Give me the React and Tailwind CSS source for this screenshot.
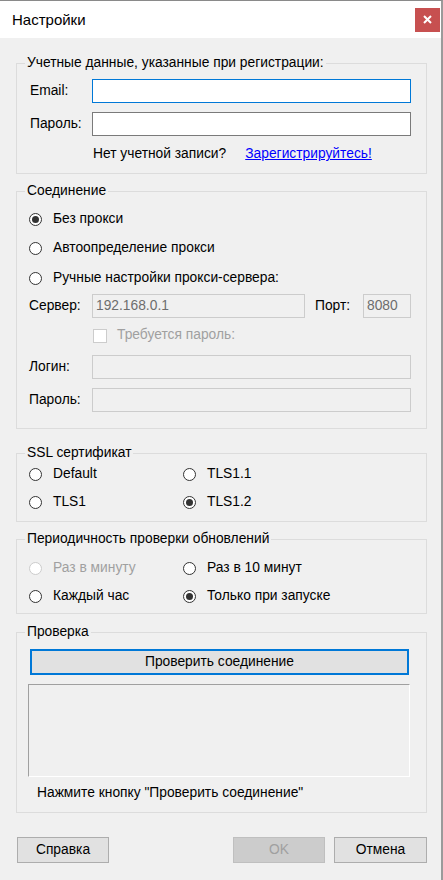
import React from "react";

const font = { fontFamily: '"Liberation Sans", Arial, sans-serif' };

function Radio({ checked, disabled, label, className = "" }) {
  return (
    <div className={`flex items-center h-[20px] ${className}`}>
      <span
        className={`w-[13px] h-[13px] rounded-full border bg-white flex items-center justify-center shrink-0 ${
          disabled ? "border-[#cccccc]" : "border-[#333333]"
        }`}
      >
        {checked && <span className="w-[7px] h-[7px] rounded-full bg-[#333333]" />}
      </span>
      <span className={`ml-[11px] ${disabled ? "text-[#a0a0a0]" : "text-black"}`}>{label}</span>
    </div>
  );
}

function Group({ title, className = "", children }) {
  return (
    <div className={`relative border border-[#dcdcdc] ${className}`}>
      <span className="absolute -top-[9px] left-[8px] px-[2px] bg-[#f0f0f0] leading-[16px]">{title}</span>
      {children}
    </div>
  );
}

function TextBox({ focused, disabled, value, className = "" }) {
  const border = focused
    ? "border-[#0078d7]"
    : disabled
    ? "border-[#cccccc]"
    : "border-[#7a7a7a]";
  return (
    <div
      className={`h-[24px] border ${border} ${
        disabled ? "bg-[#f0f0f0] text-[#6d6d6d]" : "bg-white"
      } flex items-center px-[3px] ${className}`}
    >
      {value}
    </div>
  );
}

export default function App() {
  return (
    <div
      className="w-[443px] h-[880px] bg-[#f0f0f0] text-[13.8px] text-black border-t border-[#8a8a8a] border-r-2 border-r-[#9a9a9a] overflow-hidden"
      style={font}
    >
      {/* title bar */}
      <div className="h-[37px] bg-white flex items-center justify-between pl-[12px] pr-[1px]">
        <span className="text-[15px] mt-[1px]">Настройки</span>
        <div className="w-[25px] h-[24px] bg-[#c75050] flex items-center justify-center">
          <svg width="9" height="9" viewBox="0 0 9 9">
            <path d="M1 1 L8 8 M8 1 L1 8" stroke="white" strokeWidth="2" />
          </svg>
        </div>
      </div>

      <div className="pl-[16px] pr-[14px] pt-[25px]">
        {/* account */}
        <Group title="Учетные данные, указанные при регистрации:" className="h-[111px]">
          <div className="pt-[15px] pl-[13px] pr-[15px]">
            <div className="flex items-center">
              <span className="w-[62px]">Email:</span>
              <TextBox focused className="flex-1" />
            </div>
            <div className="flex items-center mt-[9px]">
              <span className="w-[62px]">Пароль:</span>
              <TextBox className="flex-1" />
            </div>
            <div className="flex items-center mt-[8px] pl-[63px]">
              <span>Нет учетной записи?</span>
              <span className="ml-[19px] text-[#0000ff] underline">Зарегистрируйтесь!</span>
            </div>
          </div>
        </Group>

        {/* connection */}
        <Group title="Соединение" className="mt-[17px] h-[238px]">
          <div className="pl-[12px] pr-[15px] pt-[17px]">
            <Radio checked label="Без прокси" />
            <Radio label="Автоопределение прокси" className="mt-[9px]" />
            <Radio label="Ручные настройки прокси-сервера:" className="mt-[10px]" />
            <div className="flex items-center mt-[6px]">
              <span className="w-[63px]">Сервер:</span>
              <TextBox disabled value="192.168.0.1" className="w-[213px]" />
              <span className="ml-[10px] w-[48px]">Порт:</span>
              <TextBox disabled value="8080" className="w-[48px]" />
            </div>
            <div className="flex items-center mt-[10px] pl-[64px] h-[15px]">
              <span className="w-[14px] h-[14px] border border-[#cccccc] bg-white" />
              <span className="ml-[10px] text-[#a0a0a0]">Требуется пароль:</span>
            </div>
            <div className="flex items-center mt-[12px]">
              <span className="w-[63px]">Логин:</span>
              <TextBox disabled className="flex-1" />
            </div>
            <div className="flex items-center mt-[9px]">
              <span className="w-[63px]">Пароль:</span>
              <TextBox disabled className="flex-1" />
            </div>
          </div>
        </Group>

        {/* ssl */}
        <Group title="SSL сертификат" className="mt-[24px] h-[69px]">
          <div className="grid grid-cols-[154px_1fr] pl-[12px] pt-[10px] gap-y-[8px]">
            <Radio label="Default" />
            <Radio label="TLS1.1" />
            <Radio label="TLS1" />
            <Radio checked label="TLS1.2" />
          </div>
        </Group>

        {/* update interval */}
        <Group title="Периодичность проверки обновлений" className="mt-[17px] h-[75px]">
          <div className="grid grid-cols-[154px_1fr] pl-[12px] pt-[18px] gap-y-[8px]">
            <Radio disabled label="Раз в минуту" />
            <Radio label="Раз в 10 минут" />
            <Radio label="Каждый час" />
            <Radio checked label="Только при запуске" />
          </div>
        </Group>

        {/* check */}
        <Group title="Проверка" className="mt-[18px] h-[181px]">
          <div className="pl-[12px] pr-[17px] pt-[16px]">
            <div className="h-[26px] border-2 border-[#0078d7] bg-[#e1e1e1] flex items-center justify-center ml-[1px]">
              Проверить соединение
            </div>
            <div className="mt-[9px] h-[93px] border border-[#a0a0a0] border-r-white border-b-white bg-[#f0f0f0] -ml-[1px] -mr-[1px]" />
            <div className="mt-[8px] pl-[8px] leading-[16px]">Нажмите кнопку "Проверить соединение"</div>
          </div>
        </Group>

        {/* dialog buttons */}
        <div className="flex items-center mt-[24px]">
          <div className="w-[92px] h-[26px] border border-[#adadad] bg-[#e1e1e1] flex items-center justify-center ml-[1px]">
            Справка
          </div>
          <div className="w-[92px] h-[26px] border border-[#bfbfbf] bg-[#cccccc] text-[#a0a0a0] flex items-center justify-center ml-[124px]">
            OK
          </div>
          <div className="w-[93px] h-[26px] border border-[#adadad] bg-[#e1e1e1] flex items-center justify-center ml-[9px]">
            Отмена
          </div>
        </div>
      </div>
    </div>
  );
}
